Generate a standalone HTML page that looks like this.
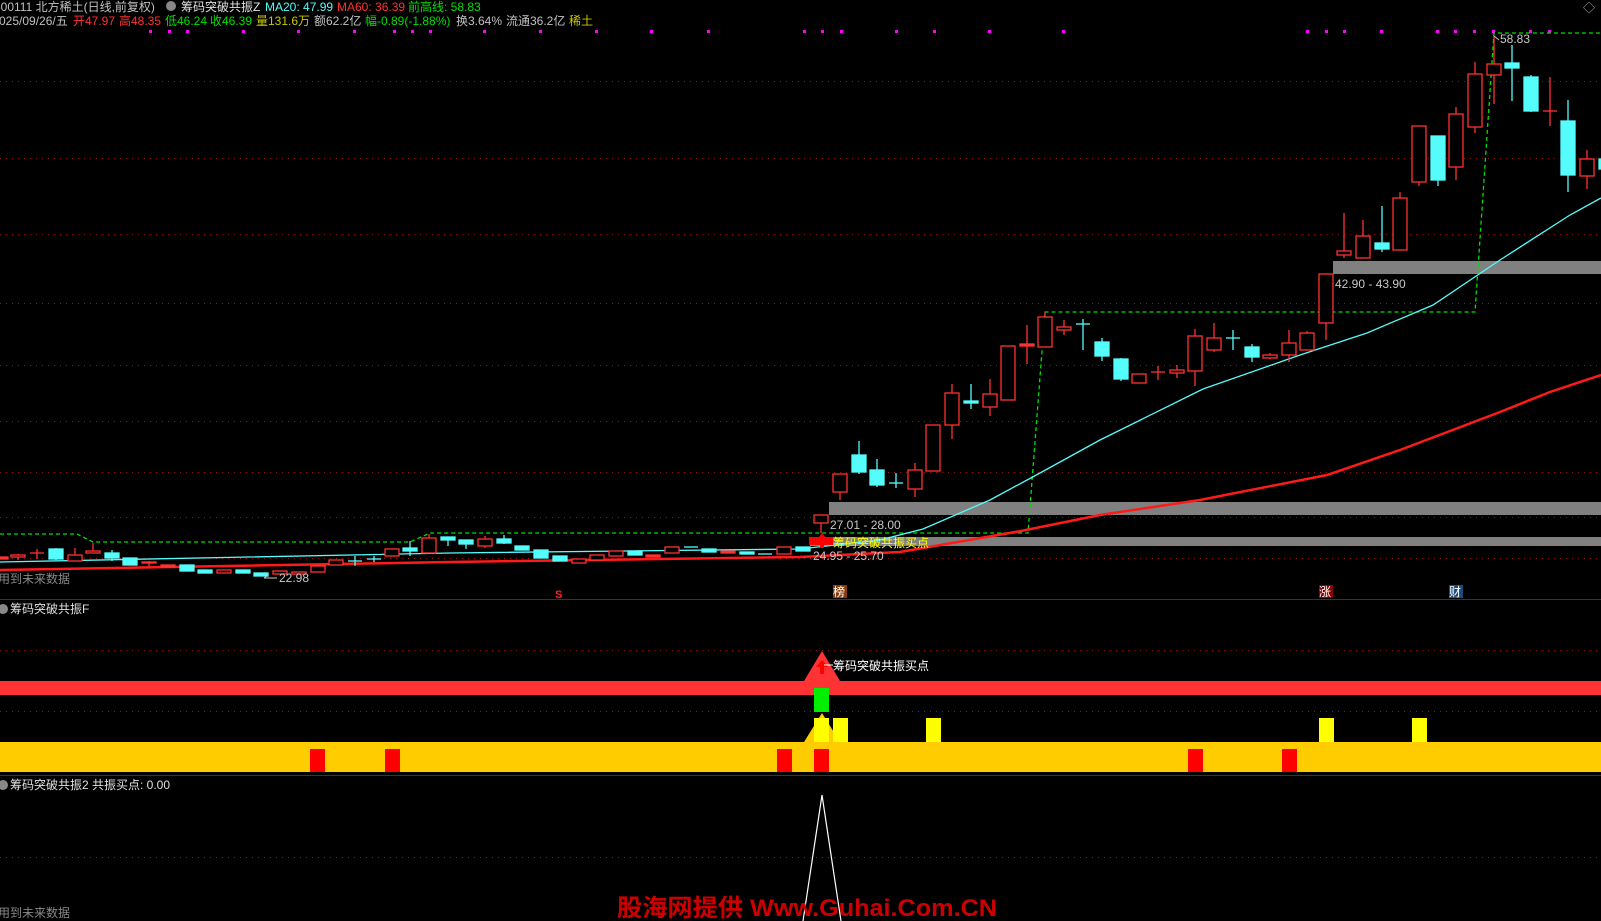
<!DOCTYPE html>
<html><head><meta charset="utf-8"><style>
html,body{margin:0;padding:0;background:#000;overflow:hidden}
svg{display:block}
text{font-family:"Liberation Sans","Noto Sans CJK SC",sans-serif;font-size:12px}
</style></head><body>
<svg width="1601" height="921" viewBox="0 0 1601 921" xmlns="http://www.w3.org/2000/svg">
<rect width="1601" height="921" fill="#000"/>
<g stroke="#8b1a1a" stroke-dasharray="1,5" stroke-width="1">
<line x1="0" y1="81.5" x2="1601" y2="81.5"/><line x1="0" y1="158.5" x2="1601" y2="158.5"/>
<line x1="0" y1="234.5" x2="1601" y2="234.5"/><line x1="0" y1="303.5" x2="1601" y2="303.5"/>
<line x1="0" y1="365.5" x2="1601" y2="365.5"/><line x1="0" y1="421.5" x2="1601" y2="421.5"/>
<line x1="0" y1="472.5" x2="1601" y2="472.5"/><line x1="0" y1="517.5" x2="1601" y2="517.5"/>
<line x1="0" y1="558.5" x2="1601" y2="558.5"/>
<line x1="0" y1="650.5" x2="1601" y2="650.5"/><line x1="0" y1="711.5" x2="1601" y2="711.5"/>
<line x1="0" y1="857.5" x2="1601" y2="857.5"/>
</g>
<text x="-6" y="11" fill="#c0c0c0">600111 北方稀土(日线,前复权)</text>
<circle cx="171" cy="6" r="5" fill="#888"/>
<text x="181" y="11" fill="#e0e0e0">筹码突破共振Z</text>
<text x="265" y="11" fill="#54fcfc">MA20: 47.99</text>
<text x="337" y="11" fill="#ff3232">MA60: 36.39</text>
<text x="408" y="11" fill="#00e000">前高线: 58.83</text>
<text x="-1" y="25" fill="#c0c0c0">025/09/26/五</text>
<text x="73" y="25" fill="#ff3232">开47.97</text>
<text x="119" y="25" fill="#ff3232">高48.35</text>
<text x="165" y="25" fill="#00e000">低46.24</text>
<text x="210" y="25" fill="#00e000">收46.39</text>
<text x="256" y="25" fill="#c8c800">量131.6万</text>
<text x="314" y="25" fill="#c0c0c0">额62.2亿</text>
<text x="365" y="25" fill="#00e000">幅-0.89(-1.88%)</text>
<text x="456" y="25" fill="#c0c0c0">换3.64%</text>
<text x="506" y="25" fill="#c0c0c0">流通36.2亿</text>
<text x="569" y="25" fill="#c8c800">稀土</text>
<text x="1583" y="12" fill="#aaa">◇</text>
<g fill="#ff00ff">
<rect x="149" y="30" width="3" height="3"/><rect x="168" y="30" width="3" height="3"/><rect x="186" y="30" width="3" height="3"/>
<rect x="242" y="30" width="3" height="3"/><rect x="297" y="30" width="3" height="3"/><rect x="353" y="30" width="3" height="3"/>
<rect x="393" y="30" width="3" height="3"/><rect x="411" y="30" width="3" height="3"/><rect x="429" y="30" width="3" height="3"/>
<rect x="483" y="30" width="3" height="3"/><rect x="539" y="30" width="3" height="3"/><rect x="595" y="30" width="3" height="3"/>
<rect x="650" y="30" width="3" height="3"/><rect x="707" y="30" width="3" height="3"/><rect x="803" y="30" width="3" height="3"/>
<rect x="821" y="30" width="3" height="3"/><rect x="840" y="30" width="3" height="3"/><rect x="895" y="30" width="3" height="3"/>
<rect x="933" y="30" width="3" height="3"/><rect x="988" y="30" width="3" height="3"/><rect x="1062" y="30" width="3" height="3"/>
<rect x="1306" y="30" width="3" height="3"/><rect x="1325" y="30" width="3" height="3"/><rect x="1343" y="30" width="3" height="3"/>
<rect x="1380" y="30" width="3" height="3"/><rect x="1436" y="30" width="3" height="3"/><rect x="1454" y="30" width="3" height="3"/>
<rect x="1473" y="30" width="3" height="3"/><rect x="1492" y="30" width="3" height="3"/><rect x="1529" y="30" width="3" height="3"/>
<rect x="1548" y="30" width="3" height="3"/>
</g>
<rect x="829" y="502" width="772" height="13" fill="#808080"/>
<rect x="810" y="537" width="791" height="9" fill="#808080"/>
<rect x="1333" y="261" width="268" height="13" fill="#808080"/>
<polyline fill="none" stroke="#00e000" stroke-width="1.3" stroke-dasharray="4,3" points="0,534 77,534 93,542 410,542 430,533 1028,533 1045,312 1475,312 1494,33 1601,33"/>
<polyline fill="none" stroke="#54fcfc" stroke-width="1.3" points="0,562 450,553 800,549 880,540 923,529 990,500 1040,473 1100,440 1203,389 1300,355 1367,333 1433,305 1500,260 1570,215 1601,198"/>
<polyline fill="none" stroke="#ff1a1a" stroke-width="2.5" points="0,570 450,562 800,557 900,552 1021,531 1100,515 1200,500 1327,475 1400,450 1500,412 1550,392 1601,375"/>
<g stroke-width="1.3">
<g stroke="#ff3232" fill="#000">
<line x1="18" y1="554" x2="18" y2="560"/><rect x="11" y="555" width="14" height="2"/>
<line x1="37" y1="549" x2="37" y2="559"/><line x1="30" y1="553" x2="44" y2="553"/>
<line x1="75" y1="548" x2="75" y2="561"/><rect x="68" y="555" width="14" height="6"/>
<line x1="93" y1="543" x2="93" y2="553"/><rect x="86" y="551" width="14" height="2"/>
<line x1="149" y1="561" x2="149" y2="567"/><rect x="142" y="562" width="14" height="1"/>
<rect x="161" y="565" width="14" height="2" fill="#ff3232"/>
<rect x="217" y="570" width="14" height="3"/>
<rect x="273" y="571" width="14" height="3"/><rect x="292" y="572" width="14" height="2"/>
<rect x="311" y="566" width="14" height="6"/><rect x="329" y="560" width="14" height="5"/>
<rect x="385" y="549" width="14" height="7"/>
<line x1="429" y1="534" x2="429" y2="538"/><rect x="422" y="538" width="14" height="15"/>
<line x1="485" y1="536" x2="485" y2="548"/><rect x="478" y="539" width="14" height="7"/>
<rect x="572" y="559" width="14" height="4"/><rect x="590" y="555" width="14" height="5"/>
<rect x="609" y="551" width="14" height="5"/><rect x="646" y="555" width="14" height="2" fill="#ff3232"/>
<rect x="665" y="547" width="14" height="6"/><rect x="721" y="551" width="14" height="2" fill="#ff3232"/>
<rect x="777" y="547" width="14" height="7"/>
<line x1="821" y1="523" x2="821" y2="533"/><rect x="814" y="515" width="14" height="8"/>
<line x1="840" y1="492" x2="840" y2="500"/><rect x="833" y="474" width="14" height="18"/>
<line x1="915" y1="463" x2="915" y2="497"/><rect x="908" y="470" width="14" height="19"/>
<rect x="926" y="425" width="14" height="46"/>
<line x1="952" y1="384" x2="952" y2="439"/><rect x="945" y="393" width="14" height="32"/>
<line x1="990" y1="379" x2="990" y2="416"/><rect x="983" y="394" width="14" height="13"/>
<rect x="1001" y="346" width="14" height="54"/>
<line x1="1027" y1="325" x2="1027" y2="364"/><rect x="1020" y="344" width="14" height="2" fill="#ff3232"/>
<line x1="1045" y1="312" x2="1045" y2="317"/><rect x="1038" y="317" width="14" height="30"/>
<line x1="1064" y1="320" x2="1064" y2="335"/><rect x="1057" y="327" width="14" height="3"/>
<rect x="1132" y="374" width="14" height="9"/>
<line x1="1158" y1="366" x2="1158" y2="380"/><line x1="1151" y1="372" x2="1165" y2="372"/>
<line x1="1177" y1="365" x2="1177" y2="378"/><rect x="1170" y="370" width="14" height="3"/>
<line x1="1195" y1="329" x2="1195" y2="386"/><rect x="1188" y="336" width="14" height="35"/>
<line x1="1214" y1="323" x2="1214" y2="352"/><rect x="1207" y="338" width="14" height="12"/>
<line x1="1270" y1="353" x2="1270" y2="359"/><rect x="1263" y="355" width="14" height="3"/>
<line x1="1289" y1="330" x2="1289" y2="362"/><rect x="1282" y="343" width="14" height="12"/>
<line x1="1307" y1="331" x2="1307" y2="333"/><rect x="1300" y="333" width="14" height="17"/>
<line x1="1326" y1="323" x2="1326" y2="340"/><rect x="1319" y="274" width="14" height="49"/>
<line x1="1344" y1="213" x2="1344" y2="258"/><rect x="1337" y="251" width="14" height="4"/>
<line x1="1363" y1="220" x2="1363" y2="236"/><rect x="1356" y="236" width="14" height="22"/>
<line x1="1400" y1="192" x2="1400" y2="198"/><rect x="1393" y="198" width="14" height="52"/>
<line x1="1419" y1="182" x2="1419" y2="186"/><rect x="1412" y="126" width="14" height="56"/>
<line x1="1456" y1="107" x2="1456" y2="180"/><rect x="1449" y="114" width="14" height="53"/>
<line x1="1475" y1="62" x2="1475" y2="133"/><rect x="1468" y="74" width="14" height="53"/>
<line x1="1494" y1="36" x2="1494" y2="104"/><rect x="1487" y="64" width="14" height="11"/>
<line x1="1550" y1="77" x2="1550" y2="126"/><line x1="1543" y1="111" x2="1557" y2="111"/>
<line x1="1587" y1="150" x2="1587" y2="189"/><rect x="1580" y="159" width="14" height="17"/>
<rect x="-3" y="557" width="11" height="2" fill="#ff3232"/>
</g>
<g stroke="#54fcfc" fill="#54fcfc">
<line x1="56" y1="548" x2="56" y2="560"/><rect x="49" y="549" width="14" height="10"/>
<line x1="112" y1="550" x2="112" y2="561"/><rect x="105" y="553" width="14" height="5"/>
<rect x="123" y="558" width="14" height="7"/><rect x="180" y="565" width="14" height="6"/>
<rect x="198" y="570" width="14" height="3"/><rect x="236" y="570" width="14" height="3"/>
<rect x="254" y="573" width="14" height="3"/>
<line x1="355" y1="556" x2="355" y2="566"/><line x1="348" y1="561" x2="362" y2="561"/>
<line x1="374" y1="556" x2="374" y2="562"/><line x1="367" y1="559" x2="381" y2="559"/>
<line x1="410" y1="541" x2="410" y2="556"/><rect x="403" y="548" width="14" height="3"/>
<line x1="448" y1="537" x2="448" y2="546"/><rect x="441" y="537" width="14" height="3"/>
<line x1="466" y1="540" x2="466" y2="549"/><rect x="459" y="540" width="14" height="4"/>
<line x1="504" y1="535" x2="504" y2="544"/><rect x="497" y="539" width="14" height="4"/>
<rect x="515" y="546" width="14" height="4"/><rect x="534" y="550" width="14" height="8"/>
<rect x="553" y="556" width="14" height="5"/><rect x="628" y="551" width="14" height="4"/>
<line x1="684" y1="547" x2="698" y2="547"/><rect x="702" y="549" width="14" height="3"/>
<rect x="740" y="552" width="14" height="2"/><line x1="758" y1="554" x2="772" y2="554"/>
<rect x="796" y="547" width="14" height="4"/>
<line x1="859" y1="441" x2="859" y2="474"/><rect x="852" y="455" width="14" height="17"/>
<line x1="877" y1="459" x2="877" y2="487"/><rect x="870" y="470" width="14" height="15"/>
<line x1="896" y1="473" x2="896" y2="488"/><line x1="889" y1="483" x2="903" y2="483"/>
<line x1="971" y1="384" x2="971" y2="409"/><rect x="964" y="401" width="14" height="2"/>
<line x1="1083" y1="319" x2="1083" y2="350"/><line x1="1076" y1="324" x2="1090" y2="324"/>
<line x1="1102" y1="338" x2="1102" y2="361"/><rect x="1095" y="342" width="14" height="14"/>
<line x1="1121" y1="358" x2="1121" y2="381"/><rect x="1114" y="359" width="14" height="20"/>
<line x1="1233" y1="330" x2="1233" y2="350"/><line x1="1226" y1="338" x2="1240" y2="338"/>
<line x1="1252" y1="344" x2="1252" y2="362"/><rect x="1245" y="347" width="14" height="10"/>
<line x1="1382" y1="206" x2="1382" y2="252"/><rect x="1375" y="243" width="14" height="6"/>
<line x1="1438" y1="180" x2="1438" y2="186"/><rect x="1431" y="136" width="14" height="44"/>
<line x1="1512" y1="45" x2="1512" y2="101"/><rect x="1505" y="63" width="14" height="5"/>
<line x1="1531" y1="75" x2="1531" y2="112"/><rect x="1524" y="77" width="14" height="34"/>
<line x1="1568" y1="100" x2="1568" y2="192"/><rect x="1561" y="121" width="14" height="54"/>
<rect x="1599" y="159" width="4" height="10"/>
</g>
</g>
<text x="830" y="529" fill="#c8c8c8">27.01 - 28.00</text>
<text x="1335" y="288" fill="#c8c8c8">42.90 - 43.90</text>
<text x="1500" y="43" fill="#c8c8c8">58.83</text>
<path d="M1494,36 L1499,40" stroke="#c8c8c8"/>
<text x="813" y="560" fill="#c8c8c8">24.95 - 25.70</text>
<rect x="809" y="537" width="24" height="8" fill="#ff0000"/>
<path d="M822,533 L816,541 L820,541 L820,548 L824,548 L824,541 L828,541Z" fill="#ff0000"/>
<text x="833" y="547" fill="#ffff00">筹码突破共振买点</text>
<text x="279" y="582" fill="#c8c8c8">22.98</text>
<path d="M264,578 L277,578 M264,578 L268,575" stroke="#c8c8c8"/>
<text x="-2" y="583" fill="#888">用到未来数据</text>
<text x="555" y="598" fill="#ff2020" style="font-size:11px;font-weight:bold">S</text>
<rect x="833" y="585" width="14" height="13" fill="#8b3a0a"/><text x="833" y="596" fill="#fff">榜</text>
<rect x="1319" y="585" width="14" height="13" fill="#8b0000"/><text x="1319" y="596" fill="#fff">涨</text>
<rect x="1449" y="585" width="14" height="13" fill="#1e4a7a"/><text x="1449" y="596" fill="#fff">财</text>
<line x1="0" y1="599.5" x2="1601" y2="599.5" stroke="#b00000"/>
<circle cx="3" cy="609" r="5" fill="#888"/>
<text x="10" y="613" fill="#e0e0e0">筹码突破共振F</text>
<rect x="0" y="681" width="1601" height="14" fill="#ff3333"/>
<path d="M822,651 L804,681 L840,681Z" fill="#ff3333"/>
<path d="M822,660 L816,667 L820,667 L820,674 L824,674 L824,667 L828,667Z" fill="#ff0000"/>
<line x1="824" y1="665" x2="833" y2="665" stroke="#fff"/>
<text x="833" y="670" fill="#fff">筹码突破共振买点</text>
<rect x="814" y="688" width="15" height="24" fill="#00ee00"/>
<rect x="0" y="742" width="1601" height="30" fill="#ffcc00"/>
<path d="M822,713 L804,742 L840,742Z" fill="#ffcc00"/>
<g fill="#ffff00">
<rect x="814" y="718" width="15" height="24"/><rect x="833" y="718" width="15" height="24"/>
<rect x="926" y="718" width="15" height="24"/><rect x="1319" y="718" width="15" height="24"/>
<rect x="1412" y="718" width="15" height="24"/>
</g>
<g fill="#ff0000">
<rect x="310" y="749" width="15" height="23"/><rect x="385" y="749" width="15" height="23"/>
<rect x="777" y="749" width="15" height="23"/><rect x="814" y="749" width="15" height="23"/>
<rect x="1188" y="749" width="15" height="23"/><rect x="1282" y="749" width="15" height="23"/>
</g>
<line x1="0" y1="775.5" x2="1601" y2="775.5" stroke="#b00000"/>
<circle cx="3" cy="785" r="5" fill="#888"/>
<text x="10" y="789" fill="#e0e0e0">筹码突破共振2  共振买点: 0.00</text>
<polyline fill="none" stroke="#fff" stroke-width="1.2" points="803,921 822,795 841,921"/>
<text x="-2" y="917" fill="#888">用到未来数据</text>
<text x="617" y="916" fill="#cc0000" style="font-size:24px;font-weight:bold" textLength="380" lengthAdjust="spacingAndGlyphs">股海网提供 Www.Guhai.Com.CN</text>
</svg>
</body></html>
